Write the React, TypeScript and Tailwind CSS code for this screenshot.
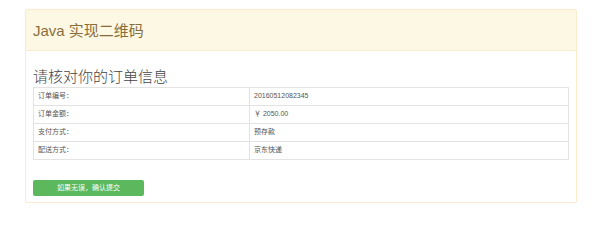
const rows: [string, string][] = [
  ['订单编号：', '20160512082345'],
  ['订单金额：', '￥ 2050.00'],
  ['支付方式：', '预存款'],
  ['配送方式：', '京东快递'],
];

const App = () => {
  return (
    <div
      className="w-[600px] h-[227px] bg-white pt-[9px] pl-[25px]"
      style={{ fontFamily: '"Liberation Sans", "Noto Sans CJK SC", sans-serif' }}
    >
      <div className="w-[552px] border border-[#faebcc] rounded-[2px]">
        {/* Panel heading */}
        <div className="h-[41px] bg-[#fcf8e3] border-b border-[#faebcc] flex items-center px-[7px]">
          <h1 className="text-[15px] leading-none text-[#8a6d3b] font-normal">Java 实现二维码</h1>
        </div>

        {/* Panel body */}
        <div className="px-[7px] pt-[16px] pb-[6px]">
          <h3 className="text-[15px] leading-[20px] text-[#444] font-light">请核对你的订单信息</h3>
          <table className="w-[536px] border-collapse border border-[#e3e3e3] text-[7px] text-[#555]">
            <tbody>
              {rows.map(([label, value]) => (
                <tr key={label} className="h-[18px]">
                  <td className="w-[216px] border border-[#e3e3e3] px-[4px] align-middle">{label}</td>
                  <td className="border border-[#e3e3e3] px-[4px] align-middle">{value}</td>
                </tr>
              ))}
            </tbody>
          </table>
          <button className="mt-[20px] w-[111px] h-[16px] bg-[#5cb85c] rounded-[2px] text-white text-[7px] flex items-center justify-center">
            如果无误，确认提交
          </button>
        </div>
      </div>
    </div>
  );
};

export default App;
